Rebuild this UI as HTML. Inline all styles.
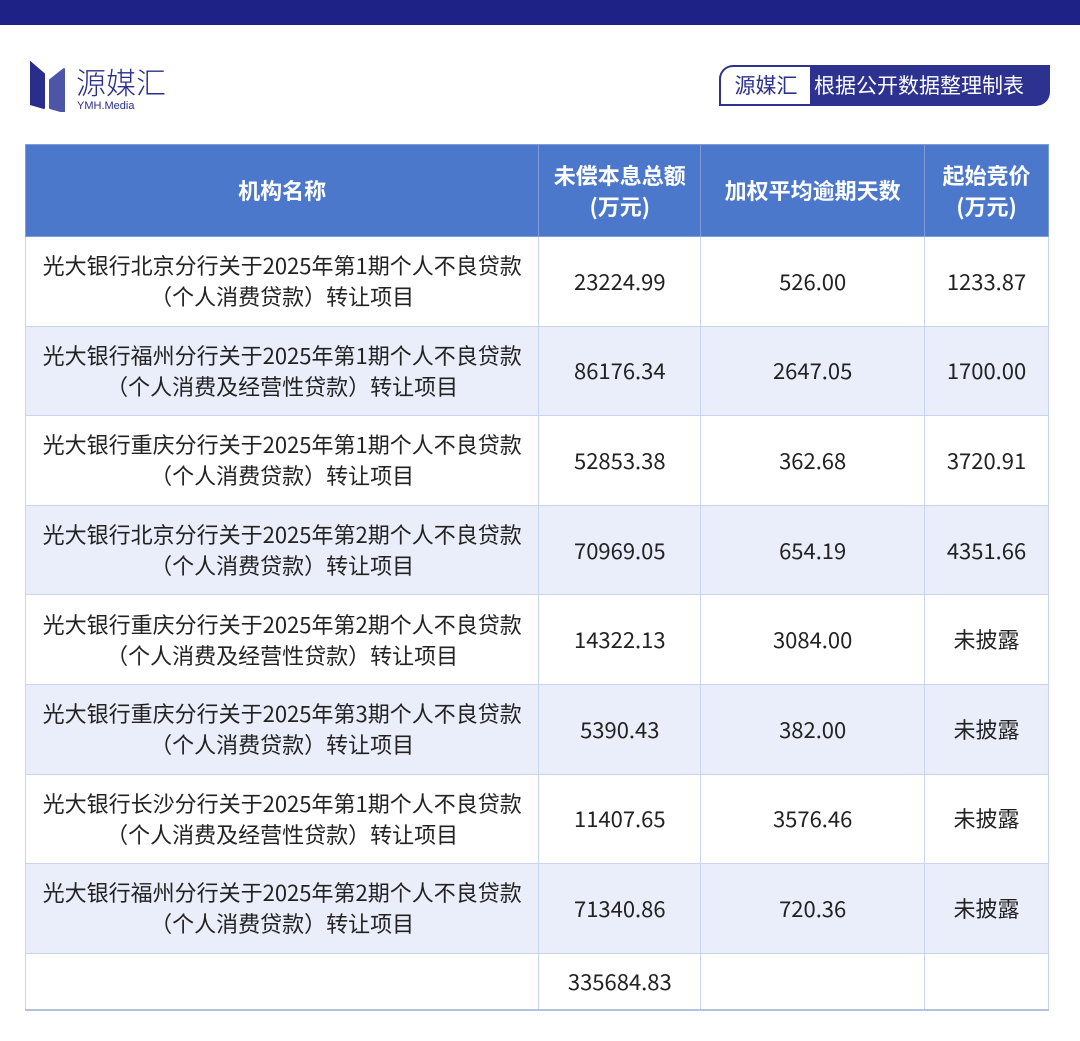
<!DOCTYPE html>
<html><head><meta charset="utf-8"><style>
*{margin:0;padding:0;box-sizing:border-box}
body{width:1080px;height:1041px;background:#fff;position:relative;overflow:hidden;font-family:"Noto Sans CJK SC","Liberation Sans",sans-serif;color:#222}
.top{position:absolute;left:0;top:0;width:1080px;height:25px;background:#1e2287}
.logo{position:absolute;left:30px;top:60px}
.lt{position:absolute;left:76px;top:62px;font-size:30px;color:#2a2d8a;letter-spacing:0px;font-weight:300;line-height:38px}
.ls{position:absolute;left:77px;top:100px;font-size:11px;color:#2a2d8a;font-family:"Liberation Sans",sans-serif}
.badge{position:absolute;left:719px;top:65px;height:41px;width:331px}
.b1{position:absolute;left:0;top:0;width:92px;height:41px;border:2px solid #2d3190;border-right:none;border-radius:14px 0 0 0;background:#fff;font-size:21px;color:#2d3190;text-align:center;line-height:37px}
.b2{position:absolute;left:91px;top:0;width:240px;height:41px;background:#2d3190;border-radius:0 0 14px 0;color:#fff;font-size:21px;line-height:40px;padding-left:4px}
table{position:absolute;left:25px;top:144px;border-collapse:collapse;width:1024px}
td,th{border:1px solid #c9d5ee;text-align:center;font-size:22px}
th{background:#4c78cc;color:#fff;font-weight:700;height:92px;line-height:31px;border-color:#7f9ddb}
td{height:89.6px;line-height:31px}
tr.a td{background:#e9eefa}
td.n{font-size:22px}
tr.t td{height:57px;border-bottom:2px solid #b4c2de}
</style></head><body>
<div class="top"></div>
<svg class="logo" width="42" height="52" viewBox="0 0 42 52"><path d="M0 2 L0 44 L14 48 L14 14 Z" fill="#2a2d8a" stroke="#2a2d8a" stroke-linejoin="round" stroke-width="2"/><path d="M34 9 L20 20 L20 48 L34 52 Z" fill="#4c55a8" stroke="#4c55a8" stroke-linejoin="round" stroke-width="2"/></svg>
<div class="lt">源媒汇</div>
<div class="ls">YMH.Media</div>
<div class="badge"><div class="b1">源媒汇</div><div class="b2">根据公开数据整理制表</div></div>
<table>
<colgroup><col style="width:514px"><col style="width:162px"><col style="width:224px"><col style="width:124px"></colgroup>
<tr><th>机构名称</th><th>未偿本息总额<br>(万元)</th><th>加权平均逾期天数</th><th>起始竞价<br>(万元)</th></tr>
<tr><td>光大银行北京分行关于2025年第1期个人不良贷款<br>（个人消费贷款）转让项目</td><td>23224.99</td><td>526.00</td><td>1233.87</td></tr>
<tr class="a"><td>光大银行福州分行关于2025年第1期个人不良贷款<br>（个人消费及经营性贷款）转让项目</td><td>86176.34</td><td>2647.05</td><td>1700.00</td></tr>
<tr><td>光大银行重庆分行关于2025年第1期个人不良贷款<br>（个人消费贷款）转让项目</td><td>52853.38</td><td>362.68</td><td>3720.91</td></tr>
<tr class="a"><td>光大银行北京分行关于2025年第2期个人不良贷款<br>（个人消费贷款）转让项目</td><td>70969.05</td><td>654.19</td><td>4351.66</td></tr>
<tr><td>光大银行重庆分行关于2025年第2期个人不良贷款<br>（个人消费及经营性贷款）转让项目</td><td>14322.13</td><td>3084.00</td><td>未披露</td></tr>
<tr class="a"><td>光大银行重庆分行关于2025年第3期个人不良贷款<br>（个人消费贷款）转让项目</td><td>5390.43</td><td>382.00</td><td>未披露</td></tr>
<tr><td>光大银行长沙分行关于2025年第1期个人不良贷款<br>（个人消费及经营性贷款）转让项目</td><td>11407.65</td><td>3576.46</td><td>未披露</td></tr>
<tr class="a"><td>光大银行福州分行关于2025年第2期个人不良贷款<br>（个人消费贷款）转让项目</td><td>71340.86</td><td>720.36</td><td>未披露</td></tr>
<tr class="t"><td></td><td>335684.83</td><td></td><td></td></tr>
</table>
</body></html>
